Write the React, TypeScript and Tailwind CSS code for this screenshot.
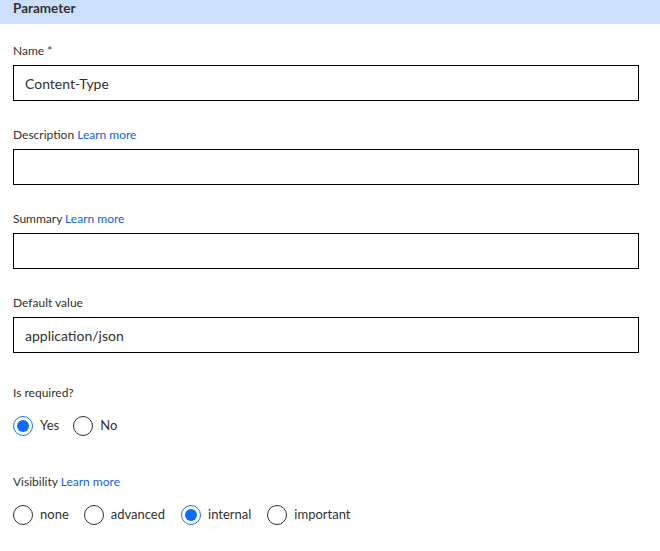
const fields = [
  { label: "Name", required: true, link: false, value: "Content-Type" },
  { label: "Description", required: false, link: true, value: "" },
  { label: "Summary", required: false, link: true, value: "" },
  { label: "Default value", required: false, link: false, value: "application/json" },
]

function Radio({ label, checked, gap }: { label: string; checked?: boolean; gap: string }) {
  return (
    <div className={`flex items-center ${gap}`}>
      <span
        className={`flex h-[20px] w-[20px] items-center justify-center rounded-full border ${
          checked ? "border-[#1a73e8]" : "border-[#323130]"
        }`}
      >
        {checked && <span className="h-[12px] w-[12px] rounded-full bg-[#0f6cfb]" />}
      </span>
      <span className="ml-[7px] text-[13px] text-[#323130]">{label}</span>
    </div>
  )
}

export default function App() {
  return (
    <div className="h-[551px] w-[660px] bg-white font-['Lato',sans-serif] text-[#323130]">
      <div className="h-[24px] bg-[#cce0fe] pl-[13px] text-[13.5px] font-bold leading-[17px]">Parameter</div>

      <div className="pl-[13px] pr-[21px] pt-[19px]">
        {fields.map((f) => (
          <div key={f.label} className="mb-[26px]">
            <div className="h-[16px] text-[12px] leading-[16px]">
              {f.label}
              {f.required && " *"}
              {f.link && <span className="text-[#0f62e0]"> Learn more</span>}
            </div>
            <div className="mt-[6px] flex h-[36px] items-center border-[1.5px] border-black pl-[11px] text-[14px]">
              {f.value}
            </div>
          </div>
        ))}

        <div className="mt-[32px] h-[16px] text-[12px] leading-[16px]">Is required?</div>
        <div className="mt-[15px] flex">
          <Radio label="Yes" checked gap="mr-[14px]" />
          <Radio label="No" gap="" />
        </div>

        <div className="mt-[38px] h-[16px] text-[12px] leading-[16px]">
          Visibility <span className="text-[#0f62e0]">Learn more</span>
        </div>
        <div className="mt-[15px] flex">
          <Radio label="none" gap="mr-[15px]" />
          <Radio label="advanced" gap="mr-[16px]" />
          <Radio label="internal" checked gap="mr-[16px]" />
          <Radio label="important" gap="" />
        </div>
      </div>
    </div>
  )
}
